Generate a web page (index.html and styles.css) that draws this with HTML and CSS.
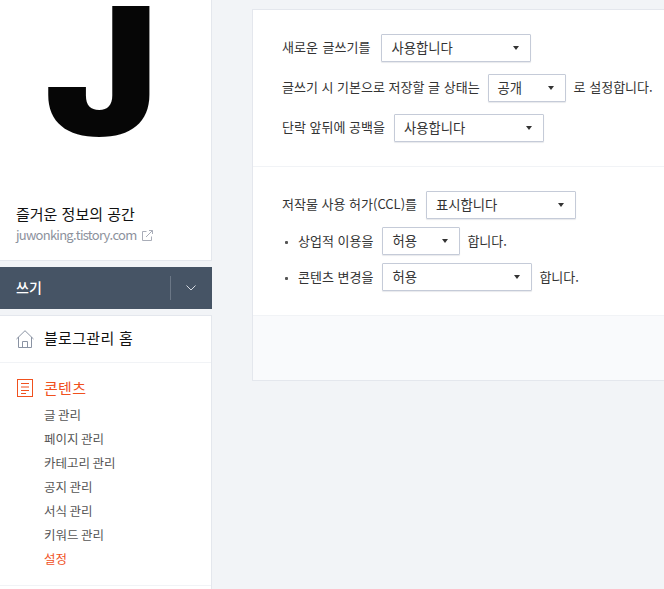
FILE: index.html
```html
<!DOCTYPE html>
<html lang="ko">

<head>
    <meta charset="UTF-8">
    <title>설정</title>
    <link rel="stylesheet" href="styles.css">
</head>

<body>
    <div class="page">
        <aside class="sidebar">
            <div class="profile">
                <div class="thumb"><span class="thumb-letter">J</span></div>
                <div class="blog-name">즐거운 정보의 공간</div>
                <div class="blog-url">
                    juwonking.tistory.com
                    <svg class="link-icon" width="11" height="11" viewBox="0 0 11 11" fill="none" stroke="#a9adb8" stroke-width="1">
                        <path d="M4.500 1.500H.5v9h9V6.500" />
                        <path d="M4 7l6.500-6.500M7 .5h3.500V4" />
                    </svg>
                </div>
            </div>

            <div class="write-bar">
                <span class="write-label">쓰기</span>
                <span class="write-more">
                    <svg class="chevron" width="10" height="6" viewBox="0 0 10 6" fill="none" stroke="#d5dae2" stroke-width="1">
                        <path d="M.5.5L5 5 9.500.5" />
                    </svg>
                </span>
            </div>

            <nav class="menu">
                <a class="menu-home">
                    <svg class="menu-icon" width="18" height="18" viewBox="0 0 18 18" fill="none" stroke="#8a93a3" stroke-width="1">
                        <path d="M.5 9L9 .7 17.500 9" />
                        <path d="M2.500 7v10.500h13V7" />
                        <path d="M6.500 17.500v-6h5v6" />
                    </svg>
                    블로그관리 홈
                </a>
                <div class="menu-group">
                    <div class="menu-title">
                        <svg class="menu-icon doc" width="18" height="18" viewBox="0 0 18 18" fill="none" stroke="#f0511e" stroke-width="1">
                            <rect x="1.500" y=".5" width="15" height="17" />
                            <path d="M5 4.500h8M5 8h8M5 11.500h8M5 14.500h5" />
                        </svg>
                        콘텐츠
                    </div>
                    <ul class="submenu">
                        <li>글 관리</li>
                        <li>페이지 관리</li>
                        <li>카테고리 관리</li>
                        <li>공지 관리</li>
                        <li>서식 관리</li>
                        <li>키워드 관리</li>
                        <li class="on">설정</li>
                    </ul>
                </div>
            </nav>
        </aside>

        <main class="panel">
            <section class="set-group first">
                <div class="row spaced">
                    새로운 글쓰기를
                    <div class="select w150 ml3">사용합니다</div>
                </div>
                <div class="row">
                    글쓰기 시 기본으로 저장할 글 상태는
                    <div class="select w78">공개</div>
                    로 설정합니다.
                </div>
                <div class="row">
                    단락 앞뒤에 공백을
                    <div class="select w150 ml1">사용합니다</div>
                </div>
            </section>

            <section class="set-group second">
                <div class="row">
                    저작물 사용 허가(CCL)를
                    <div class="select w150 ml1">표시합니다</div>
                </div>
                <div class="row bullet">
                    상업적 이용을
                    <div class="select w78 ml1">허용</div>
                    합니다.
                </div>
                <div class="row bullet">
                    콘텐츠 변경을
                    <div class="select w150 ml1">허용</div>
                    합니다.
                </div>
            </section>

            <div class="panel-foot"></div>
        </main>
    </div>
</body>

</html>
```

FILE: styles.css
```css
* {
    margin: 0;
    padding: 0;
    box-sizing: border-box;
}

html,
body {
    height: 100%;
    overflow: hidden;
}

body {
    background-color: #f2f4f7;
    color: #333;
    font-family: "Noto Sans CJK KR", "Noto Sans", sans-serif;
    font-size: 13px;
}

.page {
    display: flex;
    align-items: flex-start;
    gap: 40px;
}

/* sidebar */
.sidebar {
    flex: none;
    width: 212px;
}

.profile {
    height: 261px;
    background-color: #fff;
    border-right: 1px solid #e4e7ed;
    border-bottom: 1px solid #e4e7ed;
    padding-left: 16px;
}

.thumb {
    height: 203px;
    margin-left: -16px;
}

.thumb-letter {
    display: block;
    width: 203px;
    text-align: center;
    font-family: "Inter", sans-serif;
    font-weight: 900;
    font-size: 177px;
    line-height: 142px;
    color: #060606;
    transform: scaleX(1.08);
}

.blog-name {
    font-size: 15px;
    line-height: 22px;
    color: #111;
}

.blog-url {
    display: flex;
    align-items: center;
    gap: 6px;
    font-size: 13px;
    line-height: 20px;
    letter-spacing: -0.75px;
    color: #8d929d;
}

.write-bar {
    display: flex;
    align-items: center;
    justify-content: space-between;
    height: 42px;
    margin-top: 6px;
    padding-left: 16px;
    background-color: #465465;
    color: #fff;
    font-size: 14px;
    font-weight: 500;
}

.write-label {
    margin-bottom: 2px;
}

.write-more {
    display: flex;
    align-items: center;
    justify-content: center;
    width: 42px;
    height: 24px;
    padding-right: 1px;
    border-left: 1px solid #6b7786;
}

.chevron {
    margin-bottom: 1px;
}

.menu {
    margin-top: 6px;
    background-color: #fff;
    border-top: 1px solid #e4e7ed;
    border-right: 1px solid #e4e7ed;
    height: 300px;
}

.menu-home {
    display: flex;
    align-items: center;
    gap: 10px;
    height: 47px;
    padding-left: 16px;
    padding-bottom: 4px;
    border-bottom: 1px solid #f1f3f6;
    font-size: 15px;
    letter-spacing: 0.3px;
    color: #111;
}

.menu-home .menu-icon {
    margin-top: 3px;
}

.menu-title {
    display: flex;
    align-items: center;
    gap: 10px;
    height: 24px;
    padding-left: 16px;
    font-size: 15px;
    letter-spacing: 0.3px;
    color: #f0511e;
}

.menu-icon.doc {
    margin-top: 2px;
}

.menu-group {
    padding: 12px 0 14px;
    border-bottom: 1px solid #f1f3f6;
}

.submenu {
    list-style: none;
    padding: 4px 0 0 44px;
}

.submenu li {
    height: 24px;
    line-height: 24px;
    font-size: 12.5px;
    word-spacing: -1px;
    color: #555;
}

.submenu .on {
    color: #f0511e;
}

/* settings panel */
.panel {
    flex: 1;
    min-width: 0;
    margin-top: 9px;
    background-color: #fff;
    border: 1px solid #e4e7ed;
    border-right: 0;
}

.set-group {
    padding: 24px 0 24px 29px;
    border-bottom: 1px solid #f1f3f6;
}

.first {
    display: flex;
    flex-direction: column;
    gap: 12px;
}

.second {
    display: flex;
    flex-direction: column;
    gap: 8px;
}

.row {
    display: flex;
    align-items: flex-start;
    gap: 8px;
    height: 28px;
    line-height: 26px;
    white-space: nowrap;
}

.spaced {
    word-spacing: 1px;
}

.bullet {
    position: relative;
    padding-left: 16px;
    line-height: 28px;
}

.bullet .select {
    margin-right: -1px;
}

.bullet::before {
    content: "";
    position: absolute;
    left: 3px;
    top: 14px;
    width: 3px;
    height: 3px;
    border-radius: 1px;
    background-color: #555;
}

.select {
    position: relative;
    flex: none;
    height: 28px;
    padding-left: 9px;
    font-size: 13.33px;
    line-height: 26px;
    background-color: #fff;
    border: 1px solid #c5cbd8;
    border-radius: 1px;
    box-shadow: 0 1px 1px rgba(100, 110, 130, 0.15);
}

.select::after {
    content: "";
    position: absolute;
    right: 11px;
    top: 11px;
    border-top: 4px solid #333;
    border-left: 3px solid transparent;
    border-right: 3px solid transparent;
}

.w150 {
    width: 150px;
}

.w78 {
    width: 78px;
}

.ml1 {
    margin-left: 1px;
}

.ml3 {
    margin-left: 3px;
}

.panel-foot {
    height: 64px;
    background-color: #f9fafc;
}
```
